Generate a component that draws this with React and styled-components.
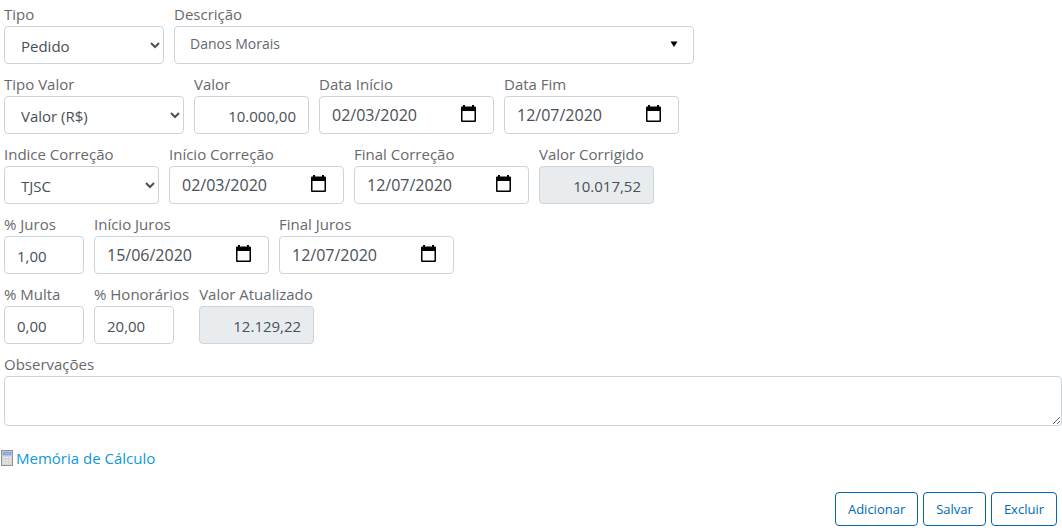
import React from 'react'
import styled, { createGlobalStyle } from 'styled-components'

const CalendarIcon = () => (
  <svg width='16' height='18' viewBox='0 0 16 18' aria-hidden='true'>
    <path
      fill='#000'
      fillRule='evenodd'
      d='M2 0h2v1.5h7V0h2v1.5h1q1 0 1 1V16q0 1-1 1H1q-1 0-1-1V2.500q0-1 1-1h1zM1.500 6v9.500h12V6z'
    />
  </svg>
)

const CalculatorIcon = () => (
  <svg width='12' height='16' viewBox='0 0 12 16' aria-hidden='true'>
    <rect x='0.5' y='0.5' width='11' height='15' fill='#dcdcdc' stroke='#8f8f8f' />
    <rect x='2' y='2' width='8' height='3' fill='#8fb6ee' stroke='#5f92d8' strokeWidth='0.6' />
    <path
      fill='#fff'
      stroke='#b8b8b8'
      strokeWidth='0.4'
      d='M2 6.5h2v2H2zM5 6.5h2v2H5zM8 6.5h2v2H8zM2 9.2h2v2H2zM5 9.2h2v2H5zM8 9.2h2v2H8zM2 12h2v2H2zM5 12h2v2H5zM8 12h2v2H8z'
    />
  </svg>
)

const SelectField = ({ id, label, width, options }) => (
  <Field>
    <Label htmlFor={id}>{label}</Label>
    <Select id={id} $width={width}>
      {options.map((option) => <option key={option}>{option}</option>)}
    </Select>
  </Field>
)

const TextField = ({ id, label, width, value, right, readOnly }) => (
  <Field>
    <Label htmlFor={id}>{label}</Label>
    <Input id={id} type='text' $width={width} $right={right} defaultValue={value} readOnly={readOnly} />
  </Field>
)

const DateField = ({ id, label, value }) => (
  <Field>
    <Label htmlFor={id}>{label}</Label>
    <DateBox>
      <DateInput id={id} type='text' defaultValue={value} />
      <DateButton type='button' aria-label={label}>
        <CalendarIcon />
      </DateButton>
    </DateBox>
  </Field>
)

const App = () => {
  return (
    <>
      <GlobalStyle />
      <Form>
        <Row>
          <SelectField id='tipo' label='Tipo' width={160} options={['Pedido']} />
          <Field>
            <Label htmlFor='descricao'>Descrição</Label>
            <Combo>
              <ComboSelect id='descricao'>
                <option>Danos Morais</option>
              </ComboSelect>
              <Arrow width='8' height='6' viewBox='0 0 8 6' aria-hidden='true'>
                <path d='M0.5 0.5h7L4 6z' />
              </Arrow>
            </Combo>
          </Field>
        </Row>
        <Row>
          <SelectField id='tipoValor' label='Tipo Valor' width={180} options={['Valor (R$)']} />
          <TextField id='valor' label='Valor' width={115} value='10.000,00' right />
          <DateField id='dataInicio' label='Data Início' value='02/03/2020' />
          <DateField id='dataFim' label='Data Fim' value='12/07/2020' />
        </Row>
        <Row>
          <SelectField id='indice' label='Indice Correção' width={155} options={['TJSC']} />
          <DateField id='inicioCorrecao' label='Início Correção' value='02/03/2020' />
          <DateField id='finalCorrecao' label='Final Correção' value='12/07/2020' />
          <TextField id='valorCorrigido' label='Valor Corrigido' width={115} value='10.017,52' right readOnly />
        </Row>
        <Row>
          <TextField id='juros' label='% Juros' width={80} value='1,00' />
          <DateField id='inicioJuros' label='Início Juros' value='15/06/2020' />
          <DateField id='finalJuros' label='Final Juros' value='12/07/2020' />
        </Row>
        <Row>
          <TextField id='multa' label='% Multa' width={80} value='0,00' />
          <TextField id='honorarios' label='% Honorários' width={80} value='20,00' />
          <TextField id='valorAtualizado' label='Valor Atualizado' width={115} value='12.129,22' right readOnly />
        </Row>
        <Field>
          <Label htmlFor='observacoes'>Observações</Label>
          <TextArea id='observacoes' />
        </Field>
      </Form>
      <Memory href='#memoria'>
        <CalculatorIcon />
        Memória de Cálculo
      </Memory>
      <Actions>
        <Button type='button'>Adicionar</Button>
        <Button type='button'>Salvar</Button>
        <Button type='button'>Excluir</Button>
      </Actions>
    </>
  )
}

export default App;

const GlobalStyle = createGlobalStyle`
  * {
    box-sizing: border-box;
  }
  body {
    margin: 0;
    background: #fff;
    color: #67696b;
  }
  body, input, select, textarea, button {
    font-family: 'Segoe UI', 'Open Sans', sans-serif;
    font-size: 15px;
  }
`
const Form = styled.form`
  display: flex;
  flex-direction: column;
  gap: 8px;
  padding: 2px 0 0 4px;
`
const Row = styled.div`
  display: flex;
  flex-wrap: wrap;
  gap: 10px;
`
const Field = styled.div`
  display: flex;
  flex-direction: column;
  align-items: flex-start;
`
const Label = styled.label`
  line-height: 24px;
`
const Input = styled.input`
  width: ${(props) => props.$width}px;
  height: 38px;
  padding: 6px 12px 4px;
  border: 1px solid #ced4da;
  border-radius: 4px;
  background: ${(props) => (props.readOnly ? '#e9ecef' : '#fff')};
  color: #495057;
  text-align: ${(props) => (props.$right ? 'right' : 'left')};
`
const Select = styled.select`
  width: ${(props) => props.$width}px;
  height: 38px;
  padding: 6px 0 4px 12px;
  border: 1px solid #ced4da;
  border-radius: 4px;
  background: #fff;
  color: #495057;
`
const DateBox = styled.div`
  position: relative;
  width: 175px;
`
const DateInput = styled(Input)`
  width: 100%;
  padding: 6px 40px 6px 12px;
  font-size: 16px;
`
const DateButton = styled.button`
  position: absolute;
  top: 9px;
  right: 17px;
  display: flex;
  padding: 0;
  border: none;
  background: none;
  cursor: pointer;
`
const Combo = styled.div`
  position: relative;
  width: 520px;
  max-width: 100%;
`
const ComboSelect = styled.select`
  appearance: none;
  width: 100%;
  height: 38px;
  padding: 4px 36px 8px 15px;
  border: 1px solid #ced4da;
  border-radius: 4px;
  background: #fff;
  color: #67696b;
  font-size: 14px;
`
const Arrow = styled.svg`
  position: absolute;
  top: 15px;
  right: 16px;
  pointer-events: none;
`
const TextArea = styled.textarea`
  width: 100%;
  height: 50px;
  padding: 6px 12px;
  border: 1px solid #ced4da;
  border-radius: 4px;
  color: #495057;
  resize: vertical;
`
const Memory = styled.a`
  display: inline-flex;
  align-items: center;
  gap: 3px;
  margin: 20px 0 0 1px;
  color: #1097e0;
  line-height: 24px;
  text-decoration: none;
`
const Actions = styled.div`
  display: flex;
  justify-content: flex-end;
  gap: 5px;
  margin-top: 22px;
  padding-right: 5px;
`
const Button = styled.button`
  height: 34px;
  padding: 0 12px;
  border: 1px solid #0069b4;
  border-radius: 4px;
  background: #fff;
  color: #0069b4;
  font-size: 13px;
  cursor: pointer;
`
